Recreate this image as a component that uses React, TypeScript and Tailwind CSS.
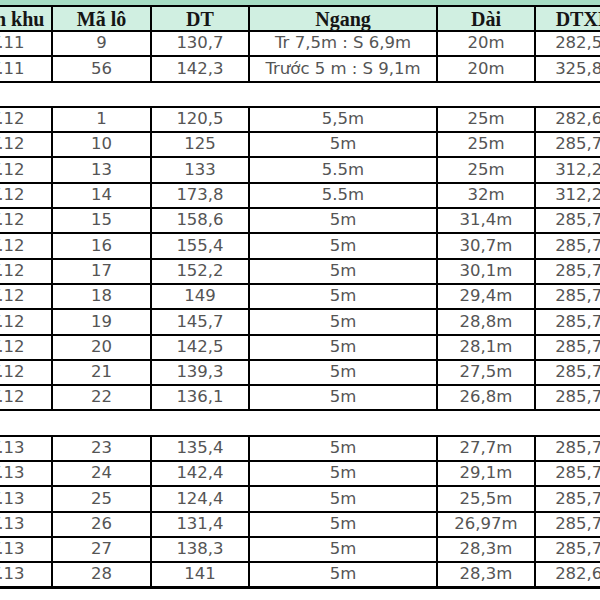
import React from "react";

type Row = [string, string, string, string, string, string];

const blocks: Row[][] = [
  [
    ["LV.11", "9", "130,7", "Tr 7,5m : S 6,9m", "20m", "282,50"],
    ["LV.11", "56", "142,3", "Trước 5 m : S 9,1m", "20m", "325,80"],
  ],
  [
    ["LV.12", "1", "120,5", "5,5m", "25m", "282,60"],
    ["LV.12", "10", "125", "5m", "25m", "285,70"],
    ["LV.12", "13", "133", "5.5m", "25m", "312,20"],
    ["LV.12", "14", "173,8", "5.5m", "32m", "312,20"],
    ["LV.12", "15", "158,6", "5m", "31,4m", "285,70"],
    ["LV.12", "16", "155,4", "5m", "30,7m", "285,70"],
    ["LV.12", "17", "152,2", "5m", "30,1m", "285,70"],
    ["LV.12", "18", "149", "5m", "29,4m", "285,70"],
    ["LV.12", "19", "145,7", "5m", "28,8m", "285,70"],
    ["LV.12", "20", "142,5", "5m", "28,1m", "285,70"],
    ["LV.12", "21", "139,3", "5m", "27,5m", "285,70"],
    ["LV.12", "22", "136,1", "5m", "26,8m", "285,70"],
  ],
  [
    ["LV.13", "23", "135,4", "5m", "27,7m", "285,70"],
    ["LV.13", "24", "142,4", "5m", "29,1m", "285,70"],
    ["LV.13", "25", "124,4", "5m", "25,5m", "285,70"],
    ["LV.13", "26", "131,4", "5m", "26,97m", "285,70"],
    ["LV.13", "27", "138,3", "5m", "28,3m", "285,70"],
    ["LV.13", "28", "141", "5m", "28,3m", "282,60"],
  ],
];

const widths = ["w-[98px]", "w-[99px]", "w-[98px]", "w-[188px]", "w-[98px]", "w-[98px]"];
const headers = ["Phân khu", "Mã lô", "DT", "Ngang", "Dài", "DTXD"];

function Cells({ values, head }: { values: string[]; head?: boolean }) {
  return (
    <>
      {values.map((v, i) => (
        <div
          key={i}
          className={`${widths[i]} shrink-0 flex items-center justify-center whitespace-nowrap border-r-2 border-black ${
            head
              ? "font-['Liberation_Serif',serif] text-[20px] font-bold text-[#151515]"
              : "font-['DejaVu_Sans',sans-serif] text-[16.5px] text-[#555]"
          }`}
        >
          {v}
        </div>
      ))}
    </>
  );
}

export default function App() {
  return (
    <div className="w-[600px] h-[600px] overflow-hidden bg-white">
      <div className="ml-[-45px] w-[679px]">
        <div className="h-[5px] bg-[#a6ddc4]" />
        <div className="flex h-[27px] border-y-2 border-black bg-[#d0efe1]">
          <Cells values={headers} head />
        </div>
        {blocks.map((rows, b) => (
          <React.Fragment key={b}>
            {b > 0 && <div className="h-[25.3px] border-b-2 border-black" />}
            {rows.map((r, i) => (
              <div
                key={i}
                className={`flex h-[25.3px] border-black ${
                  b === blocks.length - 1 && i === rows.length - 1 ? "border-b-[3px]" : "border-b-2"
                }`}
              >
                <Cells values={r} />
              </div>
            ))}
          </React.Fragment>
        ))}
      </div>
    </div>
  );
}
